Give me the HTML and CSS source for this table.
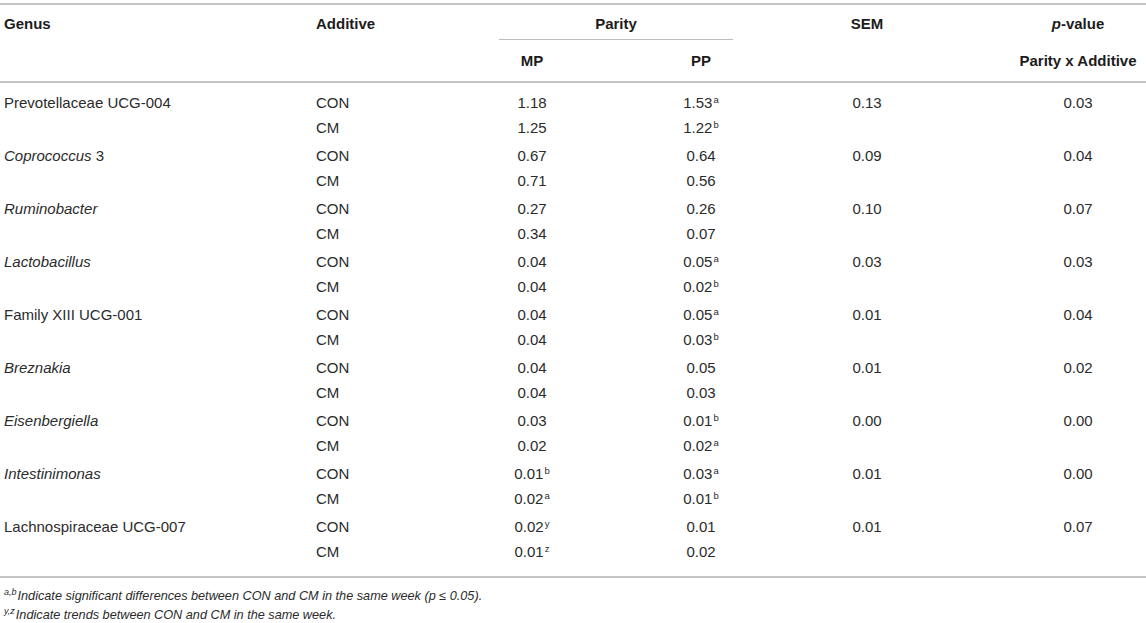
FILE: index.html
```html
<!DOCTYPE html>
<html lang="en">
<head>
  <meta charset="UTF-8">
  <title>Genus by Parity and Additive</title>
  <link rel="stylesheet" href="styles.css">
</head>
<body>

  <table class="data">
    <colgroup>
      <col class="c-genus">
      <col class="c-add">
      <col class="c-mp">
      <col class="c-pp">
      <col class="c-sem">
      <col class="c-p">
    </colgroup>
    <thead>
      <tr class="head-top">
        <th class="left">Genus</th>
        <th class="left">Additive</th>
        <th colspan="2" class="span"><div class="group">Parity</div></th>
        <th>SEM</th>
        <th class="pcol"><i>p</i>-value</th>
      </tr>
      <tr class="head-sub">
        <th></th>
        <th></th>
        <th>MP</th>
        <th>PP</th>
        <th></th>
        <th class="pcol">Parity x Additive</th>
      </tr>
    </thead>
    <tbody>
      <tr class="first">
        <td class="left">Prevotellaceae UCG-004</td>
        <td class="left">CON</td>
        <td>1.18</td>
        <td>1.53<sup>a</sup></td>
        <td>0.13</td>
        <td class="pcol">0.03</td>
      </tr>
      <tr class="second">
        <td></td>
        <td class="left">CM</td>
        <td>1.25</td>
        <td>1.22<sup>b</sup></td>
        <td></td>
        <td class="pcol"></td>
      </tr>
      <tr class="first">
        <td class="left"><i>Coprococcus</i> 3</td>
        <td class="left">CON</td>
        <td>0.67</td>
        <td>0.64</td>
        <td>0.09</td>
        <td class="pcol">0.04</td>
      </tr>
      <tr class="second">
        <td></td>
        <td class="left">CM</td>
        <td>0.71</td>
        <td>0.56</td>
        <td></td>
        <td class="pcol"></td>
      </tr>
      <tr class="first">
        <td class="left"><i>Ruminobacter</i></td>
        <td class="left">CON</td>
        <td>0.27</td>
        <td>0.26</td>
        <td>0.10</td>
        <td class="pcol">0.07</td>
      </tr>
      <tr class="second">
        <td></td>
        <td class="left">CM</td>
        <td>0.34</td>
        <td>0.07</td>
        <td></td>
        <td class="pcol"></td>
      </tr>
      <tr class="first">
        <td class="left"><i>Lactobacillus</i></td>
        <td class="left">CON</td>
        <td>0.04</td>
        <td>0.05<sup>a</sup></td>
        <td>0.03</td>
        <td class="pcol">0.03</td>
      </tr>
      <tr class="second">
        <td></td>
        <td class="left">CM</td>
        <td>0.04</td>
        <td>0.02<sup>b</sup></td>
        <td></td>
        <td class="pcol"></td>
      </tr>
      <tr class="first">
        <td class="left">Family XIII UCG-001</td>
        <td class="left">CON</td>
        <td>0.04</td>
        <td>0.05<sup>a</sup></td>
        <td>0.01</td>
        <td class="pcol">0.04</td>
      </tr>
      <tr class="second">
        <td></td>
        <td class="left">CM</td>
        <td>0.04</td>
        <td>0.03<sup>b</sup></td>
        <td></td>
        <td class="pcol"></td>
      </tr>
      <tr class="first">
        <td class="left"><i>Breznakia</i></td>
        <td class="left">CON</td>
        <td>0.04</td>
        <td>0.05</td>
        <td>0.01</td>
        <td class="pcol">0.02</td>
      </tr>
      <tr class="second">
        <td></td>
        <td class="left">CM</td>
        <td>0.04</td>
        <td>0.03</td>
        <td></td>
        <td class="pcol"></td>
      </tr>
      <tr class="first">
        <td class="left"><i>Eisenbergiella</i></td>
        <td class="left">CON</td>
        <td>0.03</td>
        <td>0.01<sup>b</sup></td>
        <td>0.00</td>
        <td class="pcol">0.00</td>
      </tr>
      <tr class="second">
        <td></td>
        <td class="left">CM</td>
        <td>0.02</td>
        <td>0.02<sup>a</sup></td>
        <td></td>
        <td class="pcol"></td>
      </tr>
      <tr class="first">
        <td class="left"><i>Intestinimonas</i></td>
        <td class="left">CON</td>
        <td>0.01<sup>b</sup></td>
        <td>0.03<sup>a</sup></td>
        <td>0.01</td>
        <td class="pcol">0.00</td>
      </tr>
      <tr class="second">
        <td></td>
        <td class="left">CM</td>
        <td>0.02<sup>a</sup></td>
        <td>0.01<sup>b</sup></td>
        <td></td>
        <td class="pcol"></td>
      </tr>
      <tr class="first">
        <td class="left">Lachnospiraceae UCG-007</td>
        <td class="left">CON</td>
        <td>0.02<sup>y</sup></td>
        <td>0.01</td>
        <td>0.01</td>
        <td class="pcol">0.07</td>
      </tr>
      <tr class="second">
        <td></td>
        <td class="left">CM</td>
        <td>0.01<sup>z</sup></td>
        <td>0.02</td>
        <td></td>
        <td class="pcol"></td>
      </tr>
    </tbody>
  </table>

  <div class="notes">
    <p><sup>a,b</sup>Indicate significant differences between CON and CM in the same week (p ≤ 0.05).</p>
    <p><sup>y,z</sup>Indicate trends between CON and CM in the same week.</p>
  </div>

</body>
</html>
```

FILE: styles.css
```css
body {
  margin: 0;
  padding-top: 3px;
  font-family: "Liberation Sans", Arial, sans-serif;
  font-size: 15px;
  color: #2b2b2b;
  background: #fff;
}

.data {
  width: 1146px;
  border-collapse: collapse;
  table-layout: fixed;
  border-top: 2px solid #c4c4c4;
  border-bottom: 2px solid #c4c4c4;
}

.c-genus { width: 312px; }
.c-add { width: 136px; }
.c-mp { width: 168px; }
.c-pp { width: 170px; }
.c-sem { width: 162px; }
.c-p { width: 198px; }

th, td {
  padding: 0 4px;
  text-align: center;
  line-height: 17px;
  white-space: nowrap;
}

th {
  font-weight: bold;
  color: #1c1c1c;
}

.left {
  text-align: left;
}

.pcol {
  padding-left: 66px;
  padding-right: 4px;
}

.head-top th {
  padding-top: 10px;
  padding-bottom: 0;
  vertical-align: top;
}

.group {
  margin: 0 49px 0 47px;
  padding-bottom: 7px;
  border-bottom: 1px solid #bdbdbd;
}

.head-sub th {
  padding-top: 12px;
  padding-bottom: 12px;
}

thead {
  border-bottom: 2px solid #c4c4c4;
}

.first td {
  padding-top: 6px;
  padding-bottom: 4px;
}

.second td {
  padding-top: 4px;
  padding-bottom: 5px;
}

tbody tr:first-child td {
  padding-top: 11px;
}

tbody tr:last-child td {
  padding-bottom: 16px;
}

sup {
  font-size: 9.5px;
  line-height: 0;
  vertical-align: 5px;
  margin-left: 1px;
}

.notes {
  padding: 9px 4px 0;
  font-size: 12.7px;
  font-style: italic;
  color: #2b2b2b;
}

.notes p {
  margin: 0;
  line-height: 19px;
}

.notes sup {
  font-size: 9px;
  margin-left: 0;
  margin-right: 1px;
}
```
